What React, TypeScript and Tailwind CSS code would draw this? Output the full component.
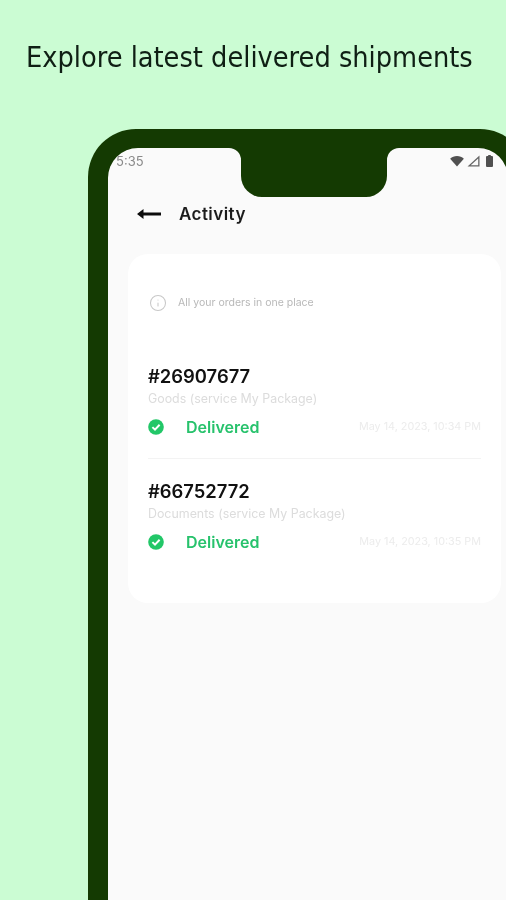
import { Info } from "lucide-react";

const orders = [
  { id: "#26907677", type: "Goods (service My Package)", date: "May 14, 2023, 10:34 PM" },
  { id: "#66752772", type: "Documents (service My Package)", date: "May 14, 2023, 10:35 PM" },
];

function CheckBadge() {
  return (
    <svg width="16" height="16" viewBox="0 0 16 16" className="shrink-0">
      <circle cx="8" cy="8" r="7.8" fill="#22c768" />
      <path d="M4.4 8.1 7 10.6l4.6-4.8" fill="none" stroke="#fff" strokeWidth="2" />
    </svg>
  );
}

function BackArrow() {
  return (
    <svg width="24" height="12" viewBox="0 0 24 12" className="shrink-0">
      <path d="M0 6 6.5 1v3.6H24v2.8H6.5V11z" fill="#0c0c0c" />
    </svg>
  );
}

function StatusIcons() {
  return (
    <div className="absolute right-[15px] top-[7px] flex items-center">
      <svg width="14" height="11" viewBox="0 0 15 12">
        <path d="M0 3C2 1.1 4.6 0 7.5 0S13 1.1 15 3L7.5 11.5z" fill="#505050" />
      </svg>
      <svg width="13" height="12" viewBox="0 0 13 12" className="ml-[3px]">
        <path d="M12.5 0.5v11H0.5z M11.2 3.6 3.7 10.3h7.5z" fill="#666" fillRule="evenodd" />
      </svg>
      <svg width="7" height="12" viewBox="0 0 7 12" className="ml-[6px]">
        <path d="M2.2 0h2.6v1H6a1 1 0 0 1 1 1v9a1 1 0 0 1-1 1H1a1 1 0 0 1-1-1V2a1 1 0 0 1 1-1h1.2z" fill="#505050" />
      </svg>
    </div>
  );
}

function Notch() {
  return (
    <div className="absolute left-[121px] top-0 flex">
      <div className="h-[12px] w-[12px] bg-[#143a02]">
        <div className="h-full w-full rounded-tr-[12px] bg-[#fafafa]" />
      </div>
      <div className="h-[49px] w-[146px] rounded-b-[21px] bg-[#143a02]" />
      <div className="h-[12px] w-[12px] bg-[#143a02]">
        <div className="h-full w-full rounded-tl-[12px] bg-[#fafafa]" />
      </div>
    </div>
  );
}

export default function App() {
  return (
    <div className="h-[900px] w-[506px] overflow-hidden bg-[#cbfcd3] font-['Inter',sans-serif]">
      <h1 className="h-[129px] whitespace-nowrap pl-[26px] pt-[37px] font-['DejaVu_Sans_Condensed','DejaVu_Sans',sans-serif] text-[28.6px] leading-[40px] text-[#0f1f14] blur-[0.3px] [font-stretch:condensed]">
        Explore latest delivered shipments
      </h1>

      <div className="ml-[88px] w-[440px] rounded-t-[48px] border-x-[20px] border-t-[19px] border-[#143a02] bg-[#143a02]">
        <div className="relative h-[780px] rounded-t-[30px] bg-[#fafafa]">
          <span className="absolute left-[8px] top-[4px] text-[13px] leading-[18px] text-[#8a8a8a] blur-[0.4px]">5:35</span>
          <Notch />
          <StatusIcons />

          <div className="flex items-center pl-[29px] pt-[51px]">
            <BackArrow />
            <span className="ml-[18px] text-[17px] font-semibold leading-[30px] tracking-[0.45px] text-[#1c1c1c] blur-[0.3px]">Activity</span>
          </div>

          <section className="ml-[20px] mt-[25px] h-[349px] w-[373px] rounded-[20px] bg-white px-[20px] pt-[39px]">
            <div className="flex items-center gap-[11px] pl-[1px]">
              <Info size={18} strokeWidth={1.4} className="text-[#c8c8c8]" />
              <span className="text-[10.5px] leading-[20px] text-[#b8b8b8] blur-[0.4px]">All your orders in one place</span>
            </div>

            <div className="mt-[50px]">
              {orders.map((order, index) => (
                <div key={order.id} className={index === 0 ? "h-[96px] border-b border-[#f3f3f3]" : "pt-[19px]"}>
                  <div className="text-[18.4px] font-semibold leading-[26px] text-[#111] blur-[0.3px]">{order.id}</div>
                  <div className="pt-[1px] text-[12.4px] leading-[17px] text-[#dcdcdc] blur-[0.4px]">{order.type}</div>
                  <div className="mt-[9px] flex items-center">
                    <CheckBadge />
                    <span className="ml-[22px] text-[16px] font-semibold leading-[22px] text-[#27c26c] blur-[0.3px]">Delivered</span>
                    <span className="ml-auto text-[10.8px] leading-[22px] text-[#ececec] blur-[0.4px]">{order.date}</span>
                  </div>
                </div>
              ))}
            </div>
          </section>
        </div>
      </div>
    </div>
  );
}
